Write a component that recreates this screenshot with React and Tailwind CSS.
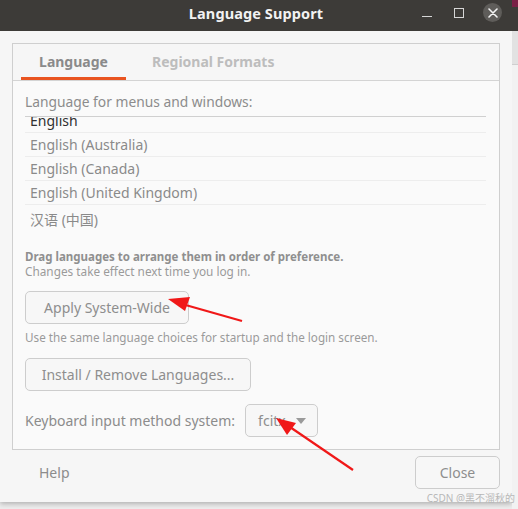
import React from "react";

const font = { fontFamily: '"Noto Sans", "Noto Sans CJK SC", sans-serif' };

function Btn({ children, className = "" }) {
  return (
    <div
      className={
        "flex items-center justify-center rounded-[5px] border border-[#cdcdcd] bg-[#f7f7f7] text-[14px] text-[#8e8e8e] " +
        className
      }
    >
      {children}
    </div>
  );
}

export default function App() {
  const rows = [
    { t: "English (Australia)" },
    { t: "English (Canada)" },
    { t: "English (United Kingdom)" },
  ];
  return (
    <div className="relative flex h-[509px] w-[518px] overflow-hidden bg-[#ededed]" style={font}>
      <div className="flex h-[502px] w-[512px] flex-col shadow-[0_2px_5px_rgba(0,0,0,0.25)]">
        {/* title bar */}
        <div className="relative flex h-[31px] shrink-0 items-start justify-center bg-[#3d3b38] pt-[3px]">
          <span className="text-[14.5px] font-bold leading-[20px] tracking-[0.1px] text-[#f2f2f2]">Language Support</span>
          <div className="absolute right-[10px] top-[3px] flex h-[19px] items-center">
            <div className="flex h-[19px] w-[32px] items-center justify-center">
              <div className="mt-[8px] h-[1.5px] w-[10px] bg-[#d6d6d6]" />
            </div>
            <div className="flex h-[19px] w-[32px] items-center justify-center">
              <div className="h-[10px] w-[10px] border-[1.5px] border-[#d6d6d6]" />
            </div>
            <div className="ml-[8px] flex h-[19px] w-[19px] items-center justify-center rounded-full bg-[#5f5d5a]">
              <svg width="10" height="10" viewBox="0 0 10 10">
                <path d="M1 1L9 9M9 1L1 9" stroke="#f4f4f4" strokeWidth="1.6" strokeLinecap="round" />
              </svg>
            </div>
          </div>
        </div>
        {/* body */}
        <div className="flex flex-1 flex-col bg-[#f6f6f6] px-[12px] pt-[12px]">
          <div className="flex h-[407px] flex-col border border-[#cfcfcf]">
            {/* tabs */}
            <div className="flex h-[37px] shrink-0 items-end border-b border-[#d4d4d4] pl-[8px]">
              <div className="flex h-full w-[105px] flex-col items-center justify-end">
                <span className="mb-[5px] text-[14px] font-bold text-[#8a8a8a]">Language</span>
                <div className="h-[3px] w-full bg-[#e95420]" />
              </div>
              <div className="ml-[26px] flex h-full flex-col justify-end">
                <span className="mb-[8px] text-[14px] font-bold text-[#bdbdbd]">Regional Formats</span>
              </div>
            </div>
            {/* content */}
            <div className="flex flex-1 flex-col bg-[#fafafa] px-[12px]">
              <div className="mt-[12px] text-[13.8px] leading-[18px] text-[#8c8c8c]">
                Language for menus and windows:
              </div>
              <div className="mr-[1px] mt-[5px] h-[116px] overflow-hidden border-t border-[#d0d0d0]">
                <div className="-mt-[8px] flex h-[24px] items-center border-b border-[#ededed] pl-[5px] text-[14px] text-[#303030]">
                  English
                </div>
                {rows.map((r) => (
                  <div
                    key={r.t}
                    className="flex h-[24px] items-center border-b border-[#ededed] pl-[5px] text-[14px] text-[#8a8a8a]"
                  >
                    {r.t}
                  </div>
                ))}
                <div className="flex h-[28px] items-center pl-[5px] text-[14px] text-[#8a8a8a]">
                  汉语 (中国)
                </div>
              </div>
              <div className="mt-[17px] text-[11.5px] font-bold leading-[15px] text-[#8f8f8f]">
                Drag languages to arrange them in order of preference.
              </div>
              <div className="text-[11.8px] leading-[15px] text-[#9a9a9a]">Changes take effect next time you log in.</div>
              <Btn className="mt-[12px] h-[33px] w-[164px]">Apply System-Wide</Btn>
              <div className="mt-[6px] text-[11.7px] leading-[15px] text-[#9a9a9a]">
                Use the same language choices for startup and the login screen.
              </div>
              <Btn className="mt-[13px] h-[33px] w-[226px]">Install / Remove Languages...</Btn>
              <div className="mt-[13px] flex items-center">
                <span className="text-[14px] text-[#8c8c8c]">Keyboard input method system:</span>
                <Btn className="ml-[10px] h-[33px] w-[73px] justify-start gap-[10px] pl-[12px]">
                  <span>fcitx</span>
                  <svg width="10" height="6" viewBox="0 0 10 6">
                    <path d="M0 0H10L5 6Z" fill="#9a9a9a" />
                  </svg>
                </Btn>
              </div>
            </div>
          </div>
          {/* footer */}
          <div className="mt-[6px] flex items-center justify-between">
            <span className="ml-[27px] text-[14px] text-[#8c8c8c]">Help</span>
            <Btn className="h-[33px] w-[85px]">Close</Btn>
          </div>
        </div>
      </div>
      {/* desktop strip */}
      <div className="flex w-[6px] flex-col">
        <div className="h-[7px] bg-[#7a1f45]" />
        <div className="h-[24px] bg-[#3d3b38]" />
        <div className="h-[34px] border-b border-[#cfcfcf] bg-[#e2e2e2]" />
        <div className="flex-1 bg-[#f2f2f2]" />
      </div>
      {/* watermark */}
      <div className="absolute bottom-[5px] right-[3px] text-[10px] leading-[12px] text-[#b8b8b8]">
        CSDN @黑不溜秋的
      </div>
      {/* annotation arrows */}
      <svg className="pointer-events-none absolute left-0 top-0" width="518" height="509">
        <line x1="242" y1="321" x2="182" y2="304" stroke="#f01818" strokeWidth="2.2" />
        <polygon points="168,299 190,297 185,311" fill="#f01818" />
        <line x1="353" y1="470" x2="287" y2="425" stroke="#f01818" strokeWidth="2.2" />
        <polygon points="276,418 296,423 287,435" fill="#f01818" />
      </svg>
    </div>
  );
}
